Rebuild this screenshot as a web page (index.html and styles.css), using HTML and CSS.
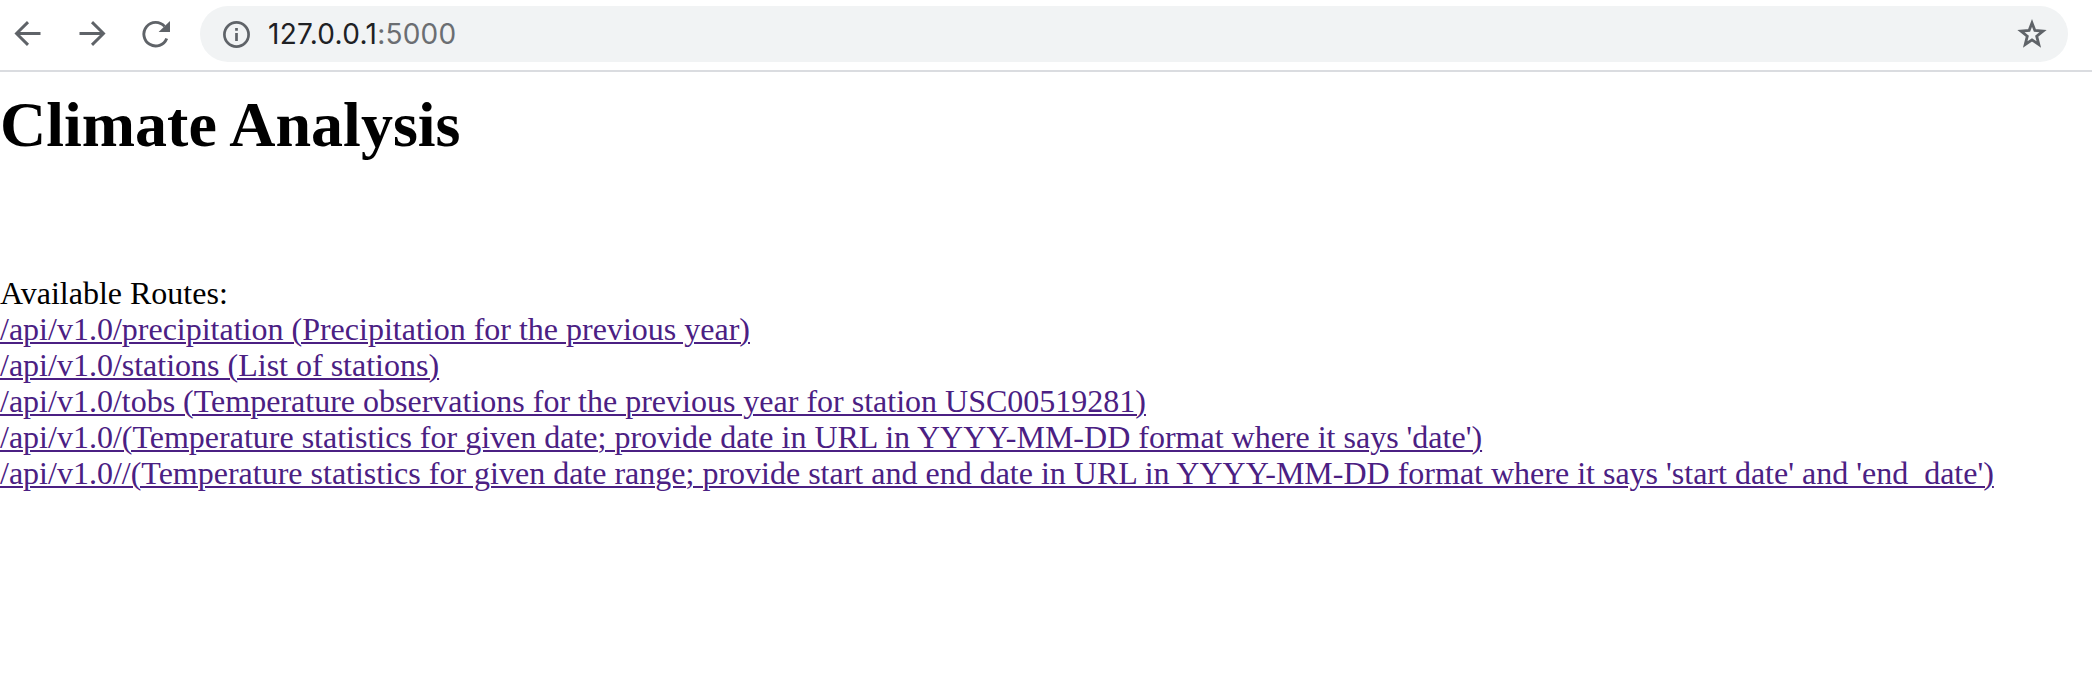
FILE: index.html
```html
<!DOCTYPE html>
<html lang="en">
<head>
<meta charset="utf-8">
<title>127.0.0.1:5000</title>
<link rel="stylesheet" href="styles.css">
</head>
<body>
<header class="toolbar">
  <nav class="nav-buttons">
    <svg class="icon" viewBox="0 0 32 32"><path d="M28.5 15.5H4.5M16 4.1L4.5 15.5L16 26.9"/></svg>
    <svg class="icon" viewBox="0 0 32 32"><path d="M3.5 15.5H27.5M16 4.1L27.5 15.5L16 26.9"/></svg>
    <svg class="icon" viewBox="0 0 32 32"><path d="M26.7 20.4A11.8 11.8 0 1 1 24.6 8.4"/><path class="solid" d="M30 3V14H18.6Z"/></svg>
  </nav>
  <div class="address-bar">
    <svg class="info" viewBox="0 0 28 28"><circle cx="14.5" cy="14.5" r="12.1"/><path d="M14.5 13V21M14.5 8V10.8"/></svg>
    <span class="url"><span class="host">127.0.0.1</span><span class="port">:5000</span></span>
    <svg class="star" viewBox="0 0 30 30"><path d="M15 4L17.9 11.5L26 12.1L19.7 17.2L21.8 25.5L15 20.9L8.2 25.5L10.3 17.2L4 12.1L12.1 11.5Z"/></svg>
  </div>
</header>
<main class="page">
  <h1 class="title">Climate Analysis</h1>
  <p class="label">Available Routes:</p>
  <ul class="routes">
    <li><a class="route" href="#">/api/v1.0/precipitation (Precipitation for the previous year)</a></li>
    <li><a class="route" href="#">/api/v1.0/stations (List of stations)</a></li>
    <li><a class="route" href="#">/api/v1.0/tobs (Temperature observations for the previous year for station USC00519281)</a></li>
    <li><a class="route" href="#">/api/v1.0/(Temperature statistics for given date; provide date in URL in YYYY-MM-DD format where it says 'date')</a></li>
    <li><a class="route" href="#">/api/v1.0//(Temperature statistics for given date range; provide start and end date in URL in YYYY-MM-DD format where it says 'start date' and 'end_date')</a></li>
  </ul>
</main>
</body>
</html>
```
FILE: styles.css
```css
* { box-sizing: border-box; }
body {
  margin: 0;
  background: #fff;
  color: #000;
  font-family: "Liberation Serif", "Times New Roman", serif;
  font-size: 32px;
  line-height: 36px;
}
.toolbar {
  display: flex;
  align-items: flex-start;
  height: 72px;
  padding: 6px 24px 0 12px;
  border-bottom: 2px solid #dadce0;
}
.nav-buttons {
  display: flex;
  align-items: center;
  gap: 32px;
  height: 56px;
  width: 188px;
  flex: none;
}
.icon {
  width: 32px;
  height: 32px;
  fill: none;
  stroke: #5f6368;
  stroke-width: 2.9;
}
.icon .solid { fill: #5f6368; stroke: none; }
.address-bar {
  display: flex;
  align-items: center;
  flex: 1;
  height: 56px;
  padding: 0 21px 0 22px;
  border-radius: 28px;
  background: #f1f3f4;
}
.info {
  width: 28px;
  height: 28px;
  margin-right: 18px;
  fill: none;
  stroke: #5f6368;
  stroke-width: 2.7;
}
.url {
  color: #202124;
  font-family: Inter, sans-serif;
  font-size: 28px;
}
.host { letter-spacing: 0.3px; }
.port { color: #6b6e72; letter-spacing: 0.2px; }
.star {
  width: 30px;
  height: 30px;
  margin-left: auto;
  fill: none;
  stroke: #5f6368;
  stroke-width: 2.8;
}
.page { padding-top: 17px; }
.title {
  margin: 0 0 115px;
  font-size: 64px;
  line-height: 71px;
}
.label { margin: 0; }
.routes {
  margin: 0;
  padding: 0;
  list-style: none;
  white-space: nowrap;
}
.route {
  color: #4b2083;
  text-decoration: underline;
  text-decoration-thickness: 2px;
  text-underline-offset: 2px;
}
```
